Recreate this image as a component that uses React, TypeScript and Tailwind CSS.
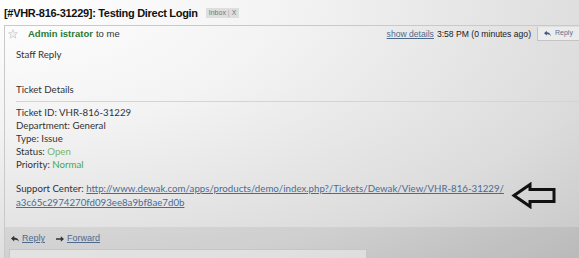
import React from "react";

const ReplyIcon = ({ className }: { className?: string }) => (
  <svg viewBox="0 0 12 10" className={className}>
    <path d="M5 1 L1 4.5 L5 8 L5 6 C8 5.6 10 6.5 11 9 C10.6 5.5 8.5 3.4 5 3.2 Z" fill="currentColor" />
  </svg>
);

const ForwardIcon = ({ className }: { className?: string }) => (
  <svg viewBox="0 0 12 10" className={className}>
    <path d="M1 4 L7 4 L7 1.5 L11 5 L7 8.5 L7 6 L1 6 Z" fill="currentColor" />
  </svg>
);

const Star = () => (
  <svg viewBox="0 0 10 10" className="h-[10px] w-[10px]">
    <path
      d="M5 0.6 L6.3 3.6 L9.5 3.8 L7 5.9 L7.8 9.2 L5 7.4 L2.2 9.2 L3 5.9 L0.5 3.8 L3.7 3.6 Z"
      fill="#f2f2f2"
      stroke="#c8c8c8"
      strokeWidth="0.7"
    />
  </svg>
);

const Row = ({ label, value, tone }: { label: string; value: string; tone?: string }) => (
  <div className="leading-[13px]">
    {label} <span className={tone}>{value}</span>
  </div>
);

export default function App() {
  return (
    <div className="relative h-[258px] w-[579px] overflow-hidden bg-[radial-gradient(ellipse_at_0%_0%,#ffffff_0%,#f3f3f3_35%,#dcdcdc_75%,#bdbdbd_110%)] text-[#333]">
      <div className="flex h-[22px] items-center gap-[8px] px-[4px] pt-[4px]">
        <h1 className="font-['Liberation_Sans',Arial,sans-serif] text-[11px] font-bold leading-none tracking-[-0.3px] text-[#111]">
          [#VHR-816-31229]: Testing Direct Login
        </h1>
        <span className="bg-[#dedede] px-[3px] font-['Liberation_Sans',Arial,sans-serif] text-[7px] leading-[10px] text-[#777]">
          Inbox <span className="text-[#aaa]">|</span> X
        </span>
      </div>

      <div className="ml-[4px] mt-[3px] h-[240px] border-l border-t border-[#c9c9c9]">
        <div className="flex h-[16px] items-center font-['Liberation_Sans',Arial,sans-serif]">
          <div className="ml-[3px] mr-[10px]">
            <Star />
          </div>
          <span className="text-[9.5px] font-bold text-[#2a7a34]">Admin istrator</span>
          <span className="ml-[3px] text-[9.5px] text-[#333]">to me</span>
          <div className="ml-auto flex items-center text-[8.6px]">
            <span className="text-[#4d6a8c] underline">show details</span>
            <span className="ml-[3px] text-[#222]">3:58 PM (0 minutes ago)</span>
            <div className="ml-[6px] flex h-[14px] w-[42px] items-center gap-[3px] border-b border-l border-[#c4c4c4] bg-[#ececec] pl-[5px] text-[7px] text-[#5a6f8c]">
              <ReplyIcon className="h-[7px] w-[9px] text-[#3e5a84]" />
              <span>Reply</span>
            </div>
          </div>
        </div>

        <div className="pl-[11px] font-['Lato','Open_Sans',sans-serif] text-[9.7px] text-[#333]">
          <div className="mt-[6px] leading-[13px]">Staff Reply</div>

          <div className="mt-[22px] border-b border-[#d4d4d4] pb-[5px] leading-[13px]">Ticket Details</div>

          <div className="mt-[4px]">
            <Row label="Ticket ID:" value="VHR-816-31229" />
            <Row label="Department:" value="General" />
            <Row label="Type:" value="Issue" />
            <Row label="Status:" value="Open" tone="text-[#78b46e]" />
            <Row label="Priority:" value="Normal" tone="text-[#4aa54a]" />
          </div>

          <div className="mt-[10px] flex items-center">
            <div className="whitespace-nowrap leading-[14px]">
              Support Center:{" "}
              <span className="text-[#4a6b95] underline">
                http://www.dewak.com/apps/products/demo/index.php?/Tickets/Dewak/View/VHR-816-31229/
              </span>
              <br />
              <span className="text-[#4a6b95] underline">a3c65c2974270fd093ee8a9bf8ae7d0b</span>
            </div>
            <svg viewBox="0 0 46 27" className="ml-[7px] h-[27px] w-[46px]">
              <path
                d="M3 13.5 L19 2.5 L19 7.5 L43 7.5 L43 19.5 L19 19.5 L19 24.5 Z"
                fill="none"
                stroke="#111"
                strokeWidth="3"
                strokeLinejoin="miter"
              />
            </svg>
          </div>
        </div>

        <div className="mt-[18px] h-[44px] bg-black/[0.06] pt-[5px] font-['Liberation_Sans',Arial,sans-serif] text-[9px]">
          <div className="flex items-center pl-[5px] text-[#4d6a8c]">
            <ReplyIcon className="h-[8px] w-[10px] text-[#333]" />
            <span className="ml-[2px] underline">Reply</span>
            <ForwardIcon className="ml-[10px] h-[8px] w-[10px] text-[#333]" />
            <span className="ml-[2px] underline">Forward</span>
          </div>
          <div className="ml-[4px] mt-[3px] h-[20px] w-[358px] border border-[#c6c6c6] bg-[#ededed]/60" />
        </div>
      </div>
    </div>
  );
}
